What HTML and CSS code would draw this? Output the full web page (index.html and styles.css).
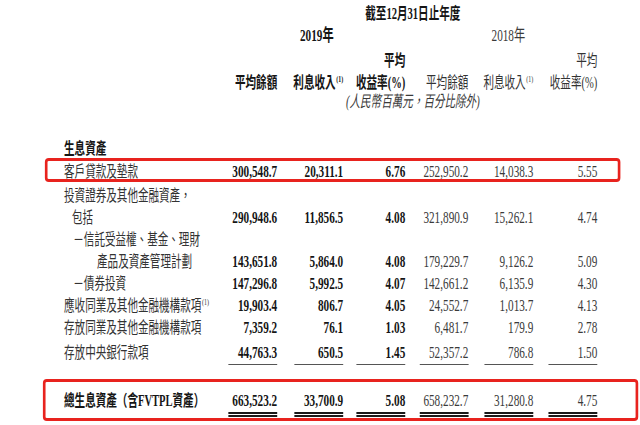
FILE: index.html
```html
<!DOCTYPE html>
<html lang="zh-Hant">
<head>
<meta charset="utf-8">
<title>生息資產</title>
<link rel="stylesheet" href="styles.css">
</head>
<body>
<div class="viewport">
<div class="page">
  <div class="row r-title"><span class="span-all bold">截至12月31日止年度</span></div>
  <div class="row r-year"><span class="span-a bold">2019年</span><span class="span-b">2018年</span></div>
  <div class="row r-avg"><span class="c3 bold">平均</span><span class="c6">平均</span></div>
  <div class="row r-head">
    <span class="c1 bold">平均餘額</span>
    <span class="c2 bold">利息收入<sup class="fn">(1)</sup></span>
    <span class="c3 bold">收益率(%)</span>
    <span class="c4">平均餘額</span>
    <span class="c5">利息收入<sup class="fn">(1)</sup></span>
    <span class="c6">收益率(%)</span>
  </div>
  <div class="row r-note"><span class="span-all note">(人民幣百萬元，百分比除外)</span></div>

  <div class="row r-section"><span class="lbl bold">生息資產</span></div>

  <div class="row boxed box1">
    <span class="lbl">客戶貸款及墊款</span>
    <span class="v b">300,548.7</span><span class="v b">20,311.1</span><span class="v b">6.76</span>
    <span class="v">252,950.2</span><span class="v">14,038.3</span><span class="v">5.55</span>
  </div>
  <div class="row r-first"><span class="lbl">投資證券及其他金融資產，</span></div>
  <div class="row">
    <span class="lbl in1">包括</span>
    <span class="v b">290,948.6</span><span class="v b">11,856.5</span><span class="v b">4.08</span>
    <span class="v">321,890.9</span><span class="v">15,262.1</span><span class="v">4.74</span>
  </div>
  <div class="row"><span class="lbl in2">－信託受益權、基金、理財</span></div>
  <div class="row">
    <span class="lbl in3">產品及資產管理計劃</span>
    <span class="v b">143,651.8</span><span class="v b">5,864.0</span><span class="v b">4.08</span>
    <span class="v">179,229.7</span><span class="v">9,126.2</span><span class="v">5.09</span>
  </div>
  <div class="row">
    <span class="lbl in2">－債券投資</span>
    <span class="v b">147,296.8</span><span class="v b">5,992.5</span><span class="v b">4.07</span>
    <span class="v">142,661.2</span><span class="v">6,135.9</span><span class="v">4.30</span>
  </div>
  <div class="row">
    <span class="lbl">應收同業及其他金融機構款項<sup class="fn">(1)</sup></span>
    <span class="v b">19,903.4</span><span class="v b">806.7</span><span class="v b">4.05</span>
    <span class="v">24,552.7</span><span class="v">1,013.7</span><span class="v">4.13</span>
  </div>
  <div class="row">
    <span class="lbl">存放同業及其他金融機構款項</span>
    <span class="v b">7,359.2</span><span class="v b">76.1</span><span class="v b">1.03</span>
    <span class="v">6,481.7</span><span class="v">179.9</span><span class="v">2.78</span>
  </div>
  <div class="row r-last">
    <span class="lbl">存放中央銀行款項</span>
    <span class="v b u1">44,763.3</span><span class="v b u1">650.5</span><span class="v b u1">1.45</span>
    <span class="v u1">52,357.2</span><span class="v u1">786.8</span><span class="v u1">1.50</span>
  </div>

  <div class="row boxed box2">
    <span class="lbl bold">總生息資產（含FVTPL資產）</span>
    <span class="v b u2">663,523.2</span><span class="v b u2">33,700.9</span><span class="v b u2">5.08</span>
    <span class="v u2">658,232.7</span><span class="v u2">31,280.8</span><span class="v u2">4.75</span>
  </div>
</div>
</div>
</body>
</html>
```

FILE: styles.css
```css
html, body {
  margin: 0;
  padding: 0;
  background: #ffffff;
  overflow: hidden;
}

body {
  width: 640px;
  height: 425px;
  font-family: "Liberation Serif", "Noto Sans CJK TC", serif;
  color: #333333;
}

.viewport {
  width: 640px;
  height: 425px;
  overflow: hidden;
}

/* the source scan is horizontally condensed */
.page {
  width: 970px;
  padding-top: 3px;
  transform: scaleX(0.66);
  transform-origin: 0 0;
  font-size: 16px;
}

.row {
  display: grid;
  grid-template-columns: 249px 74px 100px 94px 95.5px 98.5px 97px;
  align-items: start;
  padding-left: 97px;
  line-height: 22px;
  height: 22px;
  white-space: nowrap;
}

.bold { font-weight: 700; color: #151515; }

.span-all { grid-column: 2 / 8; text-align: center; }
.span-a { grid-column: 2 / 5; text-align: center; font-size: 17px; }
.span-b { grid-column: 5 / 8; text-align: center; padding-left: 21.5px; font-size: 17px; color: #3a3a3a; }

.c1 { grid-column: 2; }
.c2 { grid-column: 3; }
.c3 { grid-column: 4; }
.c4 { grid-column: 5; }
.c5 { grid-column: 6; }
.c6 { grid-column: 7; }
.c1, .c2, .c3, .c4, .c5, .c6 { justify-self: end; text-align: right; }

.r-title { height: 22px; }
.r-year { height: 24px; }
.r-avg { height: 23px; line-height: 23px; }
.r-head { height: 22px; }
.r-note { height: 16px; line-height: 16px; }
.note { font-style: italic; color: #3a3a3a; }

.fn {
  font-size: 9px;
  line-height: 0;
  vertical-align: 6px;
  margin-left: 1px;
}

.r-section { margin-top: 27px; height: 21px; line-height: 21px; }

.lbl { grid-column: 1; color: #333333; padding-top: 1px; }
.lbl.bold { color: #151515; }
.in1 { padding-left: 12px; }
.in2 { padding-left: 14px; }
.in3 { padding-left: 50px; }

.v {
  justify-self: end;
  font-size: 17px;
  color: #3a3a3a;
  padding-top: 1px;
}
.v.b { font-weight: 700; color: #151515; }

.u1, .u2 {
  display: inline-block;
  width: 74px;
  text-align: right;
}
.u1 { border-bottom: 1px solid #555555; }
.u2 { border-bottom: 5px double #1a1a1a; }

.boxed {
  border: 3px solid #e8231e;
  border-left-width: 4px;
  border-right-width: 4px;
  border-radius: 6px / 4px;
}
.box1 {
  margin-left: 68px;
  padding-left: 25px;
  width: 811px;
  padding-top: 2px;
  height: 16px;
  line-height: 16px;
  padding-right: 28px;
}
.box2 {
  margin-top: 15px;
  margin-left: 65px;
  padding-left: 28px;
  width: 808.5px;
  padding-right: 57px;
  padding-top: 8px;
  padding-bottom: 1px;
  height: 27px;
}
.box2 .lbl, .box2 .v { padding-top: 0; }

.r-first { margin-top: 2px; }
.r-last { margin-top: 3px; height: 23px; }
```
